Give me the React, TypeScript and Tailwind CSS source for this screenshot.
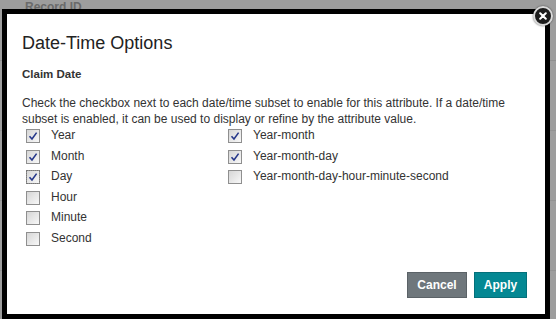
import React, { useState } from 'react';

const LEFT_OPTIONS = [
  { key: 'year', label: 'Year', checked: true },
  { key: 'month', label: 'Month', checked: true },
  { key: 'day', label: 'Day', checked: true, focused: true },
  { key: 'hour', label: 'Hour', checked: false },
  { key: 'minute', label: 'Minute', checked: false },
  { key: 'second', label: 'Second', checked: false },
];

const RIGHT_OPTIONS = [
  { key: 'ym', label: 'Year-month', checked: true },
  { key: 'ymd', label: 'Year-month-day', checked: true },
  { key: 'ymdhms', label: 'Year-month-day-hour-minute-second', checked: false },
];

const App = () => {
  const [values, setValues] = useState<Record<string, boolean>>(() => {
    const init: Record<string, boolean> = {};
    [...LEFT_OPTIONS, ...RIGHT_OPTIONS].forEach((o) => (init[o.key] = o.checked));
    return init;
  });

  const toggle = (key: string) => setValues((v) => ({ ...v, [key]: !v[key] }));

  return (
    <div className="relative w-[556px] h-[319px] overflow-hidden bg-[#9d9d9d] font-['Liberation_Sans',Arial,sans-serif]">
      {/* Page behind the overlay */}
      <div className="absolute left-[25px] top-0 text-[12px] leading-[14px] font-bold text-[#6a6a6a]">Record ID</div>
      <div className="absolute left-0 top-[60px] w-[556px] h-px bg-[#8e8e8e]" />
      <div className="absolute left-0 top-[130px] w-[556px] h-px bg-[#929292]" />
      <div className="absolute left-0 top-[200px] w-[556px] h-px bg-[#929292]" />
      <div className="absolute left-0 top-[270px] w-[556px] h-px bg-[#929292]" />

      {/* Dialog */}
      <div className="absolute left-[2px] top-[9px] w-[548px] h-[310px] border-[5px] border-black bg-white flex flex-col">
        <div className="pl-[15px] pt-[19px] flex-1">
          <h1 className="text-[18px] leading-[21px] text-[#222]">Date-Time Options</h1>
          <h2 className="mt-[13px] text-[11.5px] leading-[14px] font-bold text-[#333]">Claim Date</h2>
          <p className="mt-[14px] text-[12px] leading-[16px] text-[#333] pr-[20px]">
            Check the checkbox next to each date/time subset to enable for this attribute. If a date/time
            subset is enabled, it can be used to display or refine by the attribute value.
          </p>
          <div className="flex mt-[-1px] pl-[4px]">
            <div className="w-[202px] flex flex-col">
              {LEFT_OPTIONS.map((o) => (
                <CheckRow key={o.key} label={o.label} checked={values[o.key]} focused={o.focused} onClick={() => toggle(o.key)} />
              ))}
            </div>
            <div className="flex flex-col">
              {RIGHT_OPTIONS.map((o) => (
                <CheckRow key={o.key} label={o.label} checked={values[o.key]} onClick={() => toggle(o.key)} />
              ))}
            </div>
          </div>
        </div>
        <div className="flex justify-end gap-[7px] pr-[18px] pb-[16px]">
          <button className="w-[60px] h-[26px] bg-[#6f777c] border border-[#5b6267] text-white text-[12px] font-bold">
            Cancel
          </button>
          <button className="w-[53px] h-[26px] bg-[#048893] border border-[#03707a] text-white text-[12px] font-bold">
            Apply
          </button>
        </div>
      </div>

      {/* Close button */}
      <button className="absolute left-[533px] top-[6px] w-[20px] h-[20px] rounded-full bg-[#1c1c1c] border-2 border-[#d9d9d9] shadow-[0_0_2px_rgba(0,0,0,0.6)] flex items-center justify-center">
        <svg width="8" height="8" viewBox="0 0 8 8">
          <path d="M1.2 1.2 L6.8 6.8 M6.8 1.2 L1.2 6.8" stroke="#fff" strokeWidth="2" strokeLinecap="round" />
        </svg>
      </button>
    </div>
  );
};

const CheckRow = ({ label, checked, focused, onClick }: any) => (
  <div className="h-[20.5px] flex items-center cursor-pointer" onClick={onClick}>
    <span
      className={`w-[14px] h-[14px] border border-[#8f8f8f] bg-gradient-to-br from-[#d6d6d6] to-[#f8f8f8] flex items-center justify-center ${
        focused ? 'outline outline-1 outline-dotted outline-[#777] -outline-offset-1' : ''
      }`}
    >
      {checked && (
        <svg width="10" height="10" viewBox="0 0 10 10">
          <path d="M1.5 5.2 L4 8 L8.6 1.6" stroke="#25378a" strokeWidth="1.6" fill="none" />
        </svg>
      )}
    </span>
    <span className="ml-[11px] text-[12px] text-[#333] -mt-[2px]">{label}</span>
  </div>
);

export default App;
